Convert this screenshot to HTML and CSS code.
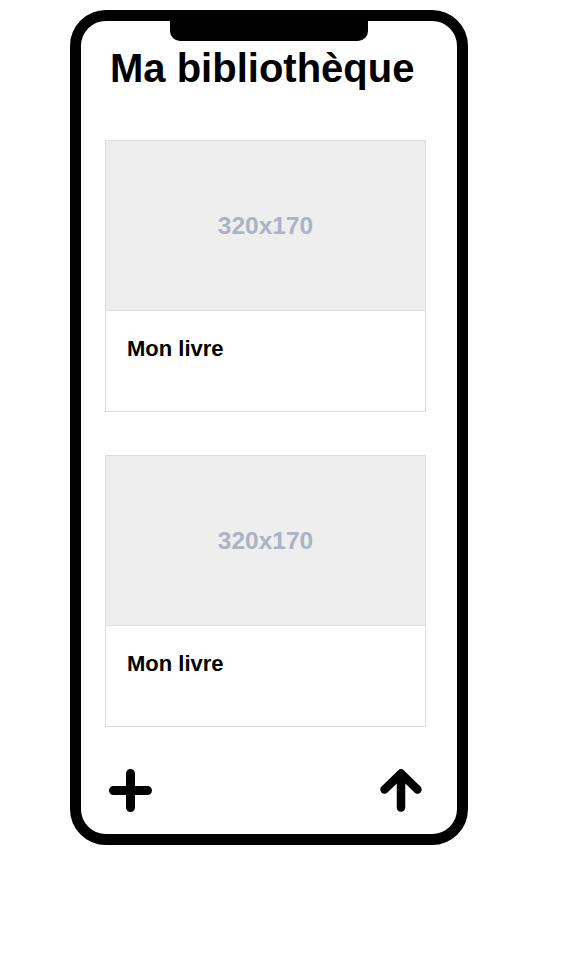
FILE: index.html
```html
<!DOCTYPE html>
<html lang="fr">
<head>
<meta charset="utf-8">
<title>Ma bibliothèque</title>
<link rel="stylesheet" href="styles.css">
</head>
<body>
<div class="phone">
  <div class="notch"></div>
  <h1 class="title">Ma bibliothèque</h1>
  <div class="card">
    <div class="card-img">320x170</div>
    <div class="card-body">Mon livre</div>
  </div>
  <div class="card">
    <div class="card-img">320x170</div>
    <div class="card-body">Mon livre</div>
  </div>
  <div class="toolbar">
    <svg class="icon" width="44" height="44" viewBox="0 0 44 44"><path d="M4.5 21.5H38.5M21.5 4.5V38.5" fill="none" stroke="#000" stroke-width="9" stroke-linecap="round"/></svg>
    <svg class="icon" width="44" height="44" viewBox="0 0 44 44"><path d="M22 38.5V5M5.5 20.5L22 4.5L38.5 20.5" fill="none" stroke="#000" stroke-width="8.5" stroke-linecap="round" stroke-linejoin="round"/></svg>
  </div>
</div>
</body>
</html>
```
FILE: styles.css
```css
html, body {
  margin: 0;
  padding: 0;
  background: #fff;
}
body {
  font-family: "Liberation Sans", Arial, sans-serif;
  padding: 10px 0 0 70px;
}
.phone {
  position: relative;
  box-sizing: border-box;
  width: 398px;
  height: 835px;
  border: 11px solid #000;
  border-radius: 36px;
  background: #fff;
  display: flex;
  flex-direction: column;
}
.notch {
  position: absolute;
  top: 0;
  left: 89px;
  width: 198px;
  height: 20px;
  background: #000;
  border-radius: 0 0 10px 10px;
}
.title {
  margin: 24px 0 0 29px;
  font-size: 40px;
  line-height: 46px;
  font-weight: bold;
  color: #000;
}
.card {
  margin: 49px 0 0 24px;
  width: 321px;
  box-sizing: border-box;
  border: 1px solid #dedede;
  display: flex;
  flex-direction: column;
}
.card + .card {
  margin-top: 43px;
}
.card-img {
  height: 169px;
  background: #eeeeee;
  border-bottom: 1px solid #dedede;
  display: flex;
  align-items: center;
  justify-content: center;
  font-size: 24.5px;
  font-weight: bold;
  color: #abb3c4;
}
.card-body {
  height: 100px;
  box-sizing: border-box;
  padding: 25px 21px 0;
  font-size: 22px;
  line-height: 26px;
  font-weight: bold;
  color: #000;
}
.toolbar {
  margin-top: 42px;
  display: flex;
  justify-content: space-between;
  padding: 0 34px 0 28px;
}
.icon {
  display: block;
}
```
